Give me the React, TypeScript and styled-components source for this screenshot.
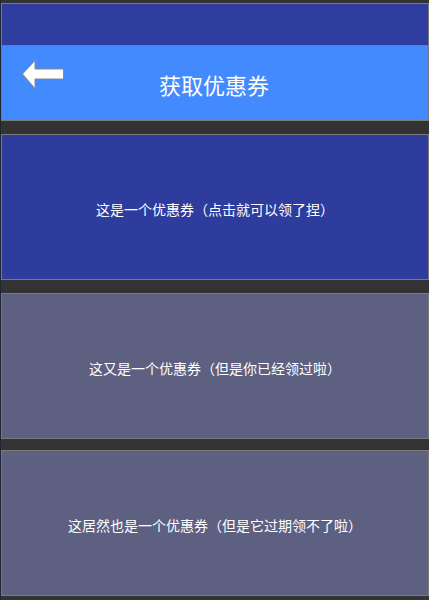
import React from 'react';
import styled, { createGlobalStyle } from 'styled-components';

const Global = createGlobalStyle`
  html, body {
    margin: 0;
    padding: 0;
    background: #1e2634;
  }
  body {
    font-family: "Noto Sans CJK SC", "Noto Sans", sans-serif;
  }
`;

const S = {
  Page: styled.div`
    margin-left: 1px;
    padding-top: 3px;
    min-height: 597px;
    background: #333333;
    display: flex;
    flex-direction: column;
  `,
  TopBar: styled.div`
    height: 41px;
    background: #2f3d9e;
    border: 1px solid #7a7a7a;
  `,
  Header: styled.div`
    position: relative;
    height: 74px;
    background: #448aff;
    border: 1px solid #7a7a7a;
    border-top: none;
    display: flex;
    align-items: center;
    justify-content: center;
  `,
  Back: styled.button`
    position: absolute;
    left: 18px;
    top: 13px;
    padding: 0;
    border: none;
    background: none;
    cursor: pointer;
    line-height: 0;
  `,
  Title: styled.h1`
    margin: 0;
    font-size: 22px;
    font-weight: 400;
    color: #ffffff;
    transform: translate(-1px, 1px);
  `,
  Card: styled.div<{ $expired?: boolean; $gap: number }>`
    margin-top: ${(p) => p.$gap}px;
    height: 141px;
    padding-top: 3px;
    border: 1px solid #7a7a7a;
    background: ${(p) => (p.$expired ? '#5d6080' : '#2e3c9e')};
    display: flex;
    align-items: center;
    justify-content: center;
    color: #ffffff;
    font-size: 14px;
  `,
};

const coupons = [
  { text: '这是一个优惠券（点击就可以领了捏）', expired: false, gap: 13 },
  { text: '这又是一个优惠券（但是你已经领过啦）', expired: true, gap: 13 },
  { text: '这居然也是一个优惠券（但是它过期领不了啦）', expired: true, gap: 11 },
];

export default function App() {
  return (
    <>
      <Global />
      <S.Page>
        <S.TopBar />
        <S.Header>
          <S.Back aria-label="返回">
            <svg width="44" height="32" viewBox="0 0 44 32">
              <polygon
                points="2.5,15 15,1.5 15,10 43.5,10 43.5,20 15,20 15,29.5"
                fill="#ffffff"
                stroke="#8a8a8a"
                strokeWidth="1"
              />
            </svg>
          </S.Back>
          <S.Title>获取优惠券</S.Title>
        </S.Header>
        {coupons.map((c) => (
          <S.Card key={c.text} $expired={c.expired} $gap={c.gap}>
            {c.text}
          </S.Card>
        ))}
      </S.Page>
    </>
  );
}
